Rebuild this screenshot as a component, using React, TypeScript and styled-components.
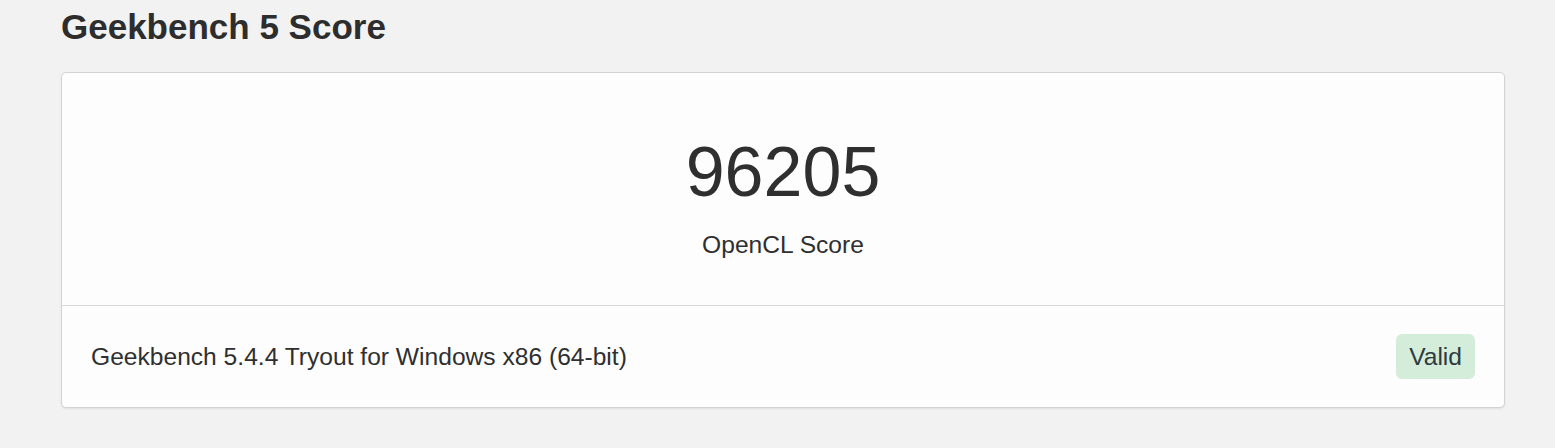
import React from 'react';
import styled, { createGlobalStyle } from 'styled-components';

const GlobalStyle = createGlobalStyle`
  body {
    margin: 0;
    background-color: #f2f2f2;
    font-family: 'Liberation Sans', Arial, sans-serif;
    color: #333;
  }
`;

const Page = styled.div`
  padding: 6px 50px 40px 61px;
`;

const Title = styled.h2`
  margin: 0 0 24px;
  font-size: 35px;
  line-height: 42px;
  font-weight: 700;
  color: #2d2d2d;
`;

const Card = styled.div`
  background-color: #fdfdfd;
  border: 1px solid #d3d3d3;
  border-radius: 5px;
  box-shadow: 0 1px 2px rgba(0, 0, 0, 0.08);
`;

const ScoreSection = styled.div`
  display: flex;
  flex-direction: column;
  align-items: center;
  padding: 59px 20px 45px;
  border-bottom: 1px solid #d8d8d8;
`;

const ScoreValue = styled.div`
  font-size: 70px;
  line-height: 80px;
  color: #2f2f2f;
`;

const ScoreLabel = styled.div`
  margin-top: 18px;
  font-size: 24.6px;
  line-height: 30px;
  color: #2f2f2f;
`;

const Footer = styled.div`
  display: flex;
  align-items: center;
  justify-content: space-between;
  padding: 28px 29px;
`;

const Version = styled.span`
  font-size: 24.6px;
  line-height: 29px;
  color: #2f2f2f;
`;

const Badge = styled.span`
  display: inline-block;
  padding: 8px 13px;
  font-size: 24.6px;
  line-height: 29px;
  border-radius: 6px;
  background-color: #d4edda;
  color: #2f3a40;
`;

const App: React.FC = () => {
  return (
    <>
      <GlobalStyle />
      <Page>
        <Title>Geekbench 5 Score</Title>
        <Card>
          <ScoreSection>
            <ScoreValue>96205</ScoreValue>
            <ScoreLabel>OpenCL Score</ScoreLabel>
          </ScoreSection>
          <Footer>
            <Version>Geekbench 5.4.4 Tryout for Windows x86 (64-bit)</Version>
            <Badge>Valid</Badge>
          </Footer>
        </Card>
      </Page>
    </>
  );
};

export default App;
